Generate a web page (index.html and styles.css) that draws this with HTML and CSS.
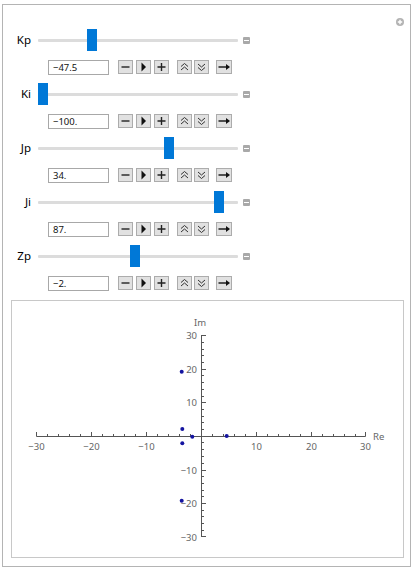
FILE: index.html
```html
<!DOCTYPE html>
<html>
<head>
<meta charset="utf-8">
<link rel="stylesheet" href="styles.css">
</head>
<body>
<div class="panel">
  <div class="header">
    <svg class="add-icon" width="8" height="8" viewBox="0 0 8 8"><circle cx="4" cy="4" r="4" fill="#b3b3b3"/><path d="M4 1.8V6.2M1.8 4H6.2" stroke="#fff" stroke-width="1.4"/></svg>
  </div>
  <div class="controls">
    <div class="control">
      <div class="slider-row">
        <span class="label">Kp</span>
        <div class="track"><div class="thumb" style="left:49px"></div></div>
        <span class="collapse"></span>
      </div>
      <div class="button-row">
        <div class="field">−47.5</div>
        <div class="btns">
          <span class="btn"><svg width="13" height="12" viewBox="0 0 13 12"><path d="M2.5 6H10.5" stroke="#222" stroke-width="1.4"/></svg></span>
          <span class="btn"><svg width="13" height="12" viewBox="0 0 13 12"><path d="M4.5 1.5L9 6L4.5 10.5Z" fill="#111"/></svg></span>
          <span class="btn"><svg width="13" height="12" viewBox="0 0 13 12"><path d="M2.5 6H10.5M6.5 2V10" stroke="#222" stroke-width="1.4"/></svg></span>
        </div>
        <div class="btns tight">
          <span class="btn"><svg width="13" height="12" viewBox="0 0 13 12"><path d="M3 5.5L6.5 2.5L10 5.5M3 9L6.5 6L10 9" stroke="#333" stroke-width="1" fill="none"/></svg></span>
          <span class="btn"><svg width="13" height="12" viewBox="0 0 13 12"><path d="M3 3L6.5 6L10 3M3 6.5L6.5 9.5L10 6.5" stroke="#333" stroke-width="1" fill="none"/></svg></span>
        </div>
        <span class="btn wide"><svg width="14" height="12" viewBox="0 0 14 12"><path d="M1.5 6H10" stroke="#111" stroke-width="1.4"/><path d="M9 3L13 6L9 9Z" fill="#111"/></svg></span>
      </div>
    </div>
    <div class="control">
      <div class="slider-row">
        <span class="label">Ki</span>
        <div class="track"><div class="thumb" style="left:0px"></div></div>
        <span class="collapse"></span>
      </div>
      <div class="button-row">
        <div class="field">−100.</div>
        <div class="btns">
          <span class="btn"><svg width="13" height="12" viewBox="0 0 13 12"><path d="M2.5 6H10.5" stroke="#222" stroke-width="1.4"/></svg></span>
          <span class="btn"><svg width="13" height="12" viewBox="0 0 13 12"><path d="M4.5 1.5L9 6L4.5 10.5Z" fill="#111"/></svg></span>
          <span class="btn"><svg width="13" height="12" viewBox="0 0 13 12"><path d="M2.5 6H10.5M6.5 2V10" stroke="#222" stroke-width="1.4"/></svg></span>
        </div>
        <div class="btns tight">
          <span class="btn"><svg width="13" height="12" viewBox="0 0 13 12"><path d="M3 5.5L6.5 2.5L10 5.5M3 9L6.5 6L10 9" stroke="#333" stroke-width="1" fill="none"/></svg></span>
          <span class="btn"><svg width="13" height="12" viewBox="0 0 13 12"><path d="M3 3L6.5 6L10 3M3 6.5L6.5 9.5L10 6.5" stroke="#333" stroke-width="1" fill="none"/></svg></span>
        </div>
        <span class="btn wide"><svg width="14" height="12" viewBox="0 0 14 12"><path d="M1.5 6H10" stroke="#111" stroke-width="1.4"/><path d="M9 3L13 6L9 9Z" fill="#111"/></svg></span>
      </div>
    </div>
    <div class="control">
      <div class="slider-row">
        <span class="label">Jp</span>
        <div class="track"><div class="thumb" style="left:126px"></div></div>
        <span class="collapse"></span>
      </div>
      <div class="button-row">
        <div class="field">34.</div>
        <div class="btns">
          <span class="btn"><svg width="13" height="12" viewBox="0 0 13 12"><path d="M2.5 6H10.5" stroke="#222" stroke-width="1.4"/></svg></span>
          <span class="btn"><svg width="13" height="12" viewBox="0 0 13 12"><path d="M4.5 1.5L9 6L4.5 10.5Z" fill="#111"/></svg></span>
          <span class="btn"><svg width="13" height="12" viewBox="0 0 13 12"><path d="M2.5 6H10.5M6.5 2V10" stroke="#222" stroke-width="1.4"/></svg></span>
        </div>
        <div class="btns tight">
          <span class="btn"><svg width="13" height="12" viewBox="0 0 13 12"><path d="M3 5.5L6.5 2.5L10 5.5M3 9L6.5 6L10 9" stroke="#333" stroke-width="1" fill="none"/></svg></span>
          <span class="btn"><svg width="13" height="12" viewBox="0 0 13 12"><path d="M3 3L6.5 6L10 3M3 6.5L6.5 9.5L10 6.5" stroke="#333" stroke-width="1" fill="none"/></svg></span>
        </div>
        <span class="btn wide"><svg width="14" height="12" viewBox="0 0 14 12"><path d="M1.5 6H10" stroke="#111" stroke-width="1.4"/><path d="M9 3L13 6L9 9Z" fill="#111"/></svg></span>
      </div>
    </div>
    <div class="control">
      <div class="slider-row">
        <span class="label">Ji</span>
        <div class="track"><div class="thumb" style="left:176px"></div></div>
        <span class="collapse"></span>
      </div>
      <div class="button-row">
        <div class="field">87.</div>
        <div class="btns">
          <span class="btn"><svg width="13" height="12" viewBox="0 0 13 12"><path d="M2.5 6H10.5" stroke="#222" stroke-width="1.4"/></svg></span>
          <span class="btn"><svg width="13" height="12" viewBox="0 0 13 12"><path d="M4.5 1.5L9 6L4.5 10.5Z" fill="#111"/></svg></span>
          <span class="btn"><svg width="13" height="12" viewBox="0 0 13 12"><path d="M2.5 6H10.5M6.5 2V10" stroke="#222" stroke-width="1.4"/></svg></span>
        </div>
        <div class="btns tight">
          <span class="btn"><svg width="13" height="12" viewBox="0 0 13 12"><path d="M3 5.5L6.5 2.5L10 5.5M3 9L6.5 6L10 9" stroke="#333" stroke-width="1" fill="none"/></svg></span>
          <span class="btn"><svg width="13" height="12" viewBox="0 0 13 12"><path d="M3 3L6.5 6L10 3M3 6.5L6.5 9.5L10 6.5" stroke="#333" stroke-width="1" fill="none"/></svg></span>
        </div>
        <span class="btn wide"><svg width="14" height="12" viewBox="0 0 14 12"><path d="M1.5 6H10" stroke="#111" stroke-width="1.4"/><path d="M9 3L13 6L9 9Z" fill="#111"/></svg></span>
      </div>
    </div>
    <div class="control">
      <div class="slider-row">
        <span class="label">Zp</span>
        <div class="track"><div class="thumb" style="left:92px"></div></div>
        <span class="collapse"></span>
      </div>
      <div class="button-row">
        <div class="field">−2.</div>
        <div class="btns">
          <span class="btn"><svg width="13" height="12" viewBox="0 0 13 12"><path d="M2.5 6H10.5" stroke="#222" stroke-width="1.4"/></svg></span>
          <span class="btn"><svg width="13" height="12" viewBox="0 0 13 12"><path d="M4.5 1.5L9 6L4.5 10.5Z" fill="#111"/></svg></span>
          <span class="btn"><svg width="13" height="12" viewBox="0 0 13 12"><path d="M2.5 6H10.5M6.5 2V10" stroke="#222" stroke-width="1.4"/></svg></span>
        </div>
        <div class="btns tight">
          <span class="btn"><svg width="13" height="12" viewBox="0 0 13 12"><path d="M3 5.5L6.5 2.5L10 5.5M3 9L6.5 6L10 9" stroke="#333" stroke-width="1" fill="none"/></svg></span>
          <span class="btn"><svg width="13" height="12" viewBox="0 0 13 12"><path d="M3 3L6.5 6L10 3M3 6.5L6.5 9.5L10 6.5" stroke="#333" stroke-width="1" fill="none"/></svg></span>
        </div>
        <span class="btn wide"><svg width="14" height="12" viewBox="0 0 14 12"><path d="M1.5 6H10" stroke="#111" stroke-width="1.4"/><path d="M9 3L13 6L9 9Z" fill="#111"/></svg></span>
      </div>
    </div>
  </div>
  <div class="plot">
    <svg class="chart" width="391" height="256" viewBox="0 0 391 256">
      <g stroke="#555" stroke-width="1" fill="none">
        <path d="M24.5 135.5H353.5"/>
        <path d="M189.5 34V236"/>
        <!-- x major ticks -->
        <path d="M24.5 135.5V131M79.5 135.5V131M134.5 135.5V131M244.5 135.5V131M299.5 135.5V131M353.5 135.5V131"/>
        <!-- x minor ticks -->
        <path d="M35.5 135.5V133M46.5 135.5V133M57.5 135.5V133M68.5 135.5V133M90.5 135.5V133M101.5 135.5V133M112.5 135.5V133M123.5 135.5V133M145.5 135.5V133M156.5 135.5V133M167.5 135.5V133M178.5 135.5V133M200.5 135.5V133M211.5 135.5V133M222.5 135.5V133M233.5 135.5V133M255.5 135.5V133M266.5 135.5V133M277.5 135.5V133M288.5 135.5V133M310.5 135.5V133M321.5 135.5V133M332.5 135.5V133M343.5 135.5V133"/>
        <!-- y major ticks -->
        <path d="M189.5 34.5H194M189.5 68.5H194M189.5 101.5H194M189.5 169.5H194M189.5 202.5H194M189.5 235.5H194"/>
        <!-- y minor ticks -->
        <path d="M189.5 41.5H192M189.5 48.5H192M189.5 54.5H192M189.5 61.5H192M189.5 74.5H192M189.5 81.5H192M189.5 88.5H192M189.5 95.5H192M189.5 108.5H192M189.5 115.5H192M189.5 121.5H192M189.5 128.5H192M189.5 141.5H192M189.5 148.5H192M189.5 155.5H192M189.5 162.5H192M189.5 175.5H192M189.5 182.5H192M189.5 189.5H192M189.5 195.5H192M189.5 209.5H192M189.5 215.5H192M189.5 222.5H192M189.5 229.5H192"/>
      </g>
      <g class="tick-labels" text-anchor="middle">
        <text x="24.5" y="149">−30</text>
        <text x="79.5" y="149">−20</text>
        <text x="134.5" y="149">−10</text>
        <text x="244.5" y="149">10</text>
        <text x="299.5" y="149">20</text>
        <text x="353.5" y="149">30</text>
      </g>
      <g class="tick-labels" text-anchor="end">
        <text x="185" y="38">30</text>
        <text x="185" y="71.5">20</text>
        <text x="185" y="105">10</text>
        <text x="185" y="173">−10</text>
        <text x="185" y="206">−20</text>
        <text x="185" y="239.5">−30</text>
      </g>
      <text class="axis-label" x="188" y="25" text-anchor="middle">Im</text>
      <text class="axis-label" x="361" y="139">Re</text>
      <g fill="#1414a0">
        <circle cx="169.7" cy="70.7" r="2"/>
        <circle cx="170.3" cy="128" r="2"/>
        <circle cx="170.3" cy="142.3" r="2"/>
        <circle cx="180.3" cy="135.7" r="2"/>
        <circle cx="214.7" cy="135" r="2"/>
        <circle cx="169.7" cy="199.7" r="2"/>
      </g>
    </svg>
  </div>
</div>
</body>
</html>
```

FILE: styles.css
```css
html, body {
  margin: 0;
  padding: 0;
  background: #ffffff;
}

body {
  font-family: "Noto Sans", "Open Sans", sans-serif;
  color: #000;
}

.panel {
  margin: 4px 0 0 2px;
  width: 407px;
  height: 561px;
  border: 1px solid #b4b4b4;
  display: flex;
  flex-direction: column;
}

.header {
  height: 24px;
  box-sizing: border-box;
  padding: 13px 6px 0 0;
  display: flex;
  justify-content: flex-end;
  align-items: flex-start;
}

.add-icon {
  display: block;
}

.controls {
  display: flex;
  flex-direction: column;
  gap: 8px;
}

.control {
  display: flex;
  flex-direction: column;
  gap: 8px;
}

.slider-row {
  height: 22px;
  display: flex;
  align-items: center;
}

.label {
  width: 28px;
  text-align: right;
  font-size: 11.5px;
  line-height: 14px;
  margin-right: 7px;
}

.track {
  position: relative;
  width: 200px;
  height: 3px;
  background: #dcdcdc;
  border-radius: 1px;
}

.thumb {
  position: absolute;
  top: -10px;
  width: 10px;
  height: 22px;
  background: #0078d7;
}

.collapse {
  position: relative;
  width: 7px;
  height: 7px;
  margin-left: 5px;
  background: #a9a9a9;
  border-radius: 1px;
}

.collapse::after {
  content: "";
  position: absolute;
  left: 1px;
  top: 3px;
  width: 5px;
  height: 1px;
  background: #fff;
}

.button-row {
  height: 16px;
  display: flex;
  align-items: center;
  padding-left: 45px;
}

.field {
  width: 61px;
  height: 15px;
  box-sizing: border-box;
  border: 1px solid #a8a8a8;
  font-size: 9.5px;
  line-height: 13px;
  padding-left: 4px;
  color: #111;
  margin-right: 9px;
}

.btns {
  display: flex;
  gap: 3px;
  margin-right: 8px;
}

.btns.tight {
  gap: 2px;
  margin-right: 7px;
}

.btn {
  width: 15px;
  height: 14px;
  box-sizing: border-box;
  border: 1px solid #acacac;
  background: #e1e1e1;
  display: flex;
  align-items: center;
  justify-content: center;
}

.btn svg {
  display: block;
}

.btn.wide {
  width: 16px;
}

.plot {
  margin: 9px 6px 0 8px;
  width: 393px;
  height: 258px;
  box-sizing: border-box;
  border: 1px solid #c8c8c8;
}

.chart {
  display: block;
}

.tick-labels text {
  font-family: "Noto Sans", "Open Sans", sans-serif;
  font-size: 9.5px;
  fill: #666;
}

.axis-label {
  font-family: "Noto Sans", "Open Sans", sans-serif;
  font-size: 9.5px;
  fill: #666;
}
```
